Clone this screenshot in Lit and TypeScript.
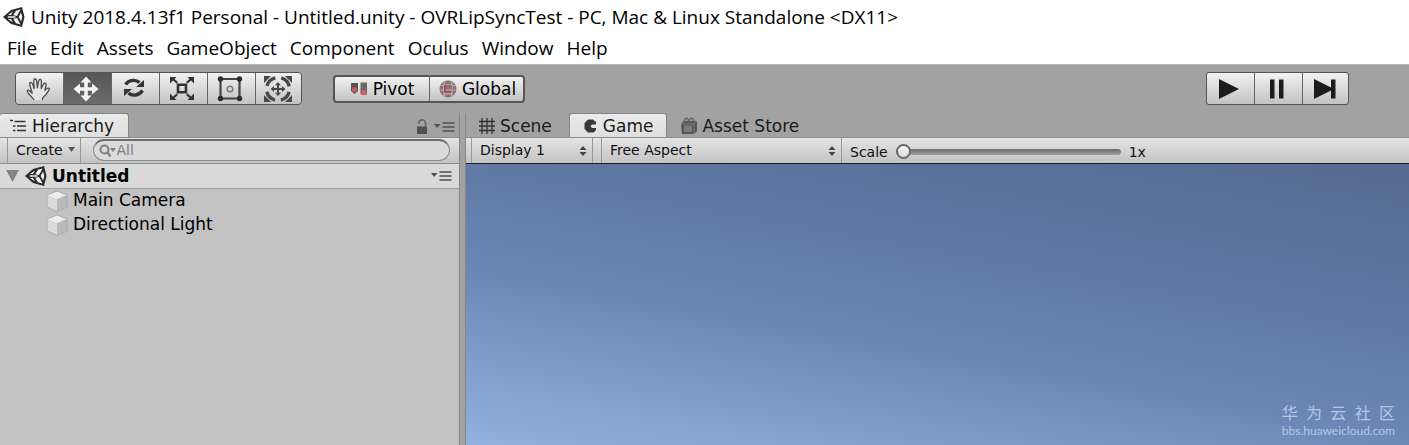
import { LitElement, html, css, svg } from "lit";
import { customElement, property, state } from "lit/decorators.js";
import { classMap } from "lit/directives/class-map.js";

const unityLogo = html`<svg viewBox="0 0 24 24" width="24" height="24" aria-hidden="true">
  <path d="M1 12 9 5 20 2l2.500 10L20 22 9 19Z" fill="#2b2b2b"/>
  <path d="M11.200 10.300 14 5.800 18.600 4.600 15 11ZM11.200 13.700l2.800 4.500 4.600 1.200L15 13ZM5.800 11.200h7.700v1.600H5.800ZM19 7.500l1.300 4.500L19 16.500 16.700 12ZM6 10 11 6.400 9 10ZM6 14l5 3.600L9 14Z" fill="#f4f4f4"/>
</svg>`;

const toolIcons: Record<string, unknown> = {
  Hand: svg`<path d="M10 25C8.500 22 4 19 3.300 16.300c-.1-1.600 1.500-1.600 2.500-.3l2.400 2.300C7.500 14.500 5 9.500 5.800 8c1-1.300 2.500 0 2.900 1.400l1.500 4.300C10.300 9.500 9 6 10 4.500c1-1.200 2.400-.3 2.600 1.300l.8 7C14 9.500 14.300 5.500 15.500 4.500c1.300-.7 2 .6 1.900 2L17.200 13.500c1.300-2.600 2-4.700 3.200-5.300 1.500-.4 1.900 1 1.600 2.300-.6 2-.8 3.500-1 5 1-1.500 2.500-2.700 3.800-2.200 1 .6.500 1.600-.3 2.600-2 2.600-3 5-5.500 6.600-.8 1-.7 1.500-.5 2.500" fill="#e4e4e4" stroke="#4a4a4a" stroke-width="1.300" stroke-linejoin="round"/>`,
  Move: svg`<path d="M14 1.500l5.500 6h-3.700v4.700H20V8.500l6.500 5.500-6.500 5.500v-3.700h-4.200v4.700h3.700L14 26.500l-5.500-6h3.700v-4.700H8v3.700L1.500 14 8 8.500v3.700h4.200V7.500H8.500Z" fill="#f5f5f5"/>`,
  Rotate: svg`<g fill="none" stroke="#333" stroke-width="3.400"><path d="M5.500 9.500C9 4.500 16 4.300 19.500 7.500"/><path d="M22.500 15.500C19 21 12 21.200 8.500 18"/></g><path d="M24 5v7h-8ZM4 21v-7h8Z" fill="#333"/>`,
  Scale: svg`<path d="M10 9.700h8v7.600h-8Z" fill="none" stroke="#333" stroke-width="2.600"/><path d="M2 2h6.500l-2 2 3.500 3-1.500 1.500-3.500-3L2 8.500ZM26 2h-6.500l2 2-3.500 3 1.500 1.500 3.500-3 3 3ZM2 25h6.500l-2-2 3.500-3-1.500-1.500-3.500 3L2 18.500ZM26 25h-6.500l2-2-3.500-3 1.500-1.500 3.500 3 3-3Z" fill="#333"/>`,
  Rect: svg`<path d="M4.500 4h19v19.500h-19Z" fill="none" stroke="#444" stroke-width="2.200"/><g fill="#2c2c2c"><circle cx="4.500" cy="4" r="2.700"/><circle cx="23.500" cy="4" r="2.700"/><circle cx="4.500" cy="23.500" r="2.700"/><circle cx="23.500" cy="23.500" r="2.700"/></g><circle cx="14" cy="14" r="2.800" fill="none" stroke="#777" stroke-width="1.500"/>`,
  Transform: svg`<g fill="#484848"><path d="M0 1h7L0 8ZM28 1v7l-7-7ZM0 27v-7l7 7ZM28 27h-7l7-7Z"/><path d="M14 7l3 3.200h-2v2.800h3v-2l3.500 3-3.500 3v-2h-3v2.800h2L14 21l-3-3.200h2V15h-3v2L6.500 14l3.500-3v2h3v-2.800h-2Z"/></g><circle cx="14" cy="14" r="11.500" fill="none" stroke="#484848" stroke-width="3.400" stroke-dasharray="12 6.060" stroke-dashoffset="-3"/>`,
};

const paneMenuIcon = html`<svg viewBox="0 0 22 12" width="22" height="12" aria-hidden="true">
  <path d="M1 3h6.500L4.200 7Z" fill="#505050"/><path d="M9.500 2h12M9.500 6h12M9.500 10h12" stroke="#505050" stroke-width="1.500"/>
</svg>`;

const cubeIcon = html`<svg viewBox="0 0 22 22" width="22" height="22" aria-hidden="true">
  <path d="M11 1 21 5v12l-10 4.500L1 17V5Z" fill="#b4b4b4" stroke="#a2a2a2" stroke-width=".8"/>
  <path d="M11 1.500 20.500 5.200 11 9.500 1.500 5.200Z" fill="#ececec"/><path d="M1.500 5.200 11 9.500V21L1.500 16.800Z" fill="#dadada"/><path d="M20.500 5.200 11 9.500V21l9.500-4.200Z" fill="#bababa"/>
</svg>`;

@customElement("title-bar")
class TitleBar extends LitElement {
  static styles = css`
    :host { display: block; background: #fff; color: #000; font-family: "Open Sans", "Noto Sans", sans-serif; }
    .title { display: flex; align-items: center; gap: 5px; height: 34px; padding-left: 2px; font-size: 19px; white-space: nowrap; }
    .title h1 { margin: 0; font: inherit; }
    .menu { display: flex; gap: 13px; height: 30px; padding-left: 7px; }
    .item { border: 0; padding: 0; background: none; font: inherit; font-size: 19px; line-height: 26px; color: inherit; padding-bottom: 2px; }
  `;
  render() {
    return html`
      <div class="title">${unityLogo}<h1>Unity 2018.4.13f1 Personal - Untitled.unity - OVRLipSyncTest - PC, Mac &amp; Linux Standalone &lt;DX11&gt;</h1></div>
      <nav class="menu">
        ${["File", "Edit", "Assets", "GameObject", "Component", "Oculus", "Window", "Help"].map((m) => html`<button class="item">${m}</button>`)}
      </nav>`;
  }
}

@customElement("main-toolbar")
class MainToolbar extends LitElement {
  @state() tool = "Move";
  static styles = css`
    :host { display: flex; align-items: center; height: 49px; padding: 0 60px 1px 15px; border-top: 1px solid #b4b4b4; box-sizing: border-box; }
    .group { display: flex; border: 1px solid #555; border-radius: 4px; overflow: hidden; background: #666; gap: 1px; }
    .transform { margin-left: 31px; border-width: 2px; border-color: #555; }
    .play { margin-left: auto; border-radius: 3px; }
    button { display: flex; align-items: center; justify-content: center; border: 0; padding: 0; color: #000; background: linear-gradient(#f2f2f2, #c2c2c2); font: 17px/20px "DejaVu Sans", sans-serif; box-sizing: border-box; }
    .tool { width: 47px; height: 31px; padding-right: 3px; }
    .tool:last-child { width: 45px; padding-right: 1px; }
    .tool.active { background: linear-gradient(#555, #6c6c6c); }
    .mode { height: 24px; gap: 5px; }
    .pivot { width: 94px; }
    .global { width: 93px; padding-left: 2px; }
  `;
  render() {
    return html`
      <div class="group">
        ${Object.keys(toolIcons).map((name) => html`
          <button class=${classMap({ tool: true, active: name === this.tool })} aria-label=${name} @click=${() => (this.tool = name)}>
            <svg viewBox="0 0 28 28" width="28" height="28">${toolIcons[name]}</svg>
          </button>`)}
      </div>
      <div class="group transform">
        <button class="mode pivot">
          <svg viewBox="0 0 18 16" width="18" height="16" aria-hidden="true"><path d="M1 2h7v8L4.500 13 1 10Z" fill="#555"/><circle cx="4.500" cy="8.500" r="2.500" fill="#d0545e"/><path d="M10.500 1.500H17v12h-6.500Z" fill="#6a6a6a"/><circle cx="13.800" cy="11.500" r="2.700" fill="#d65c66"/></svg>Pivot
        </button>
        <button class="mode global">
          <svg viewBox="0 0 18 18" width="18" height="18" aria-hidden="true"><circle cx="9" cy="9" r="8.500" fill="#8b7475"/><path d="M2 6c4-2 10-2 14 0M1.500 10h15M4 15c3-2 7-2 10 0M6 2c-2 4-2 10 0 14M12 2c2 4 2 10 0 14" fill="none" stroke="#c0acad" stroke-width="1.100"/><path d="M6 5v7h6" fill="none" stroke="#bd3f4b" stroke-width="1.600"/></svg>Global
        </button>
      </div>
      <div class="group play">
        <button class="tool" aria-label="Play"><svg viewBox="0 0 24 24" width="24" height="24"><path d="M2 2l20 10L2 22Z" fill="#1c1c1c"/></svg></button>
        <button class="tool" aria-label="Pause"><svg viewBox="0 0 24 24" width="24" height="24"><path d="M5 2.500h4.500v19H5ZM14 2.500h4.500v19H14Z" fill="#1c1c1c"/></svg></button>
        <button class="tool" aria-label="Step"><svg viewBox="0 0 24 24" width="24" height="24"><path d="M1 2l17 8.500V2.500h4.500v19H18v-8L1 22Z" fill="#1c1c1c"/></svg></button>
      </div>`;
  }
}

const tabStyles = css`
  .tabs { display: flex; height: 24px; }
  .tab { display: flex; align-items: center; gap: 4px; box-sizing: border-box; border: 0; padding: 1px 13px 0 13px; background: none; color: #1a1a1a; font: 17px/20px "DejaVu Sans", sans-serif; white-space: nowrap; }
  .tab.active { background: linear-gradient(#ebebeb, #dedede); border: 1px solid #858585; border-bottom: 0; border-radius: 3px 3px 0 0; }
  .bar { display: flex; align-items: stretch; height: 27px; box-sizing: border-box; border-top: 1px solid #8c8c8c; border-bottom: 1px solid #8c8c8c; background: linear-gradient(#e4e4e4, #c3c3c3); color: #111; font: 14px/20px "DejaVu Sans", sans-serif; }
`;

@customElement("hierarchy-pane")
class HierarchyPane extends LitElement {
  static styles = [tabStyles, css`
    :host { display: flex; flex-direction: column; background: #c2c2c2; border-right: 1px solid #858585; box-sizing: border-box; }
    .tabs { background: #a2a2a2; }
    .tab.active { padding: 1px 14px 0 10px; border-left: 0; }
    .icons { display: flex; align-items: center; gap: 4px; margin: 4px 4px 0 auto; }
    .bar { padding-left: 7px; }
    .create { display: flex; align-items: center; gap: 5px; border: solid #999; border-width: 0 1px; padding: 0 4px 2px 8px; background: none; font: inherit; color: inherit; }
    .search { display: flex; align-items: center; flex: 1; margin: 1px 9px 2px 12px; padding-left: 5px; border: 1px solid #8a8a8a; border-top: 2px solid #6c6c6c; border-radius: 12px; background: #dadada; }
    .search input { flex: 1; min-width: 0; border: 0; padding: 0 0 2px; background: none; font: inherit; color: #555; outline: none; }
    .search input::placeholder { color: #808080; opacity: 1; }
    .scene { display: flex; align-items: center; height: 25px; padding: 0 7px 0 6px; border-bottom: 1px solid #a2a2a2; background: #d9d9d9; box-sizing: border-box; font: bold 17px/24px "DejaVu Sans", sans-serif; color: #000; }
    .scene .name { flex: 1; margin-left: 4px; }
    .logo { display: flex; margin-left: 4px; }
    ul { list-style: none; margin: 0; padding: 0; }
    .row { display: flex; align-items: center; gap: 5px; height: 24px; padding-left: 46px; font: 17px/22px "DejaVu Sans", sans-serif; color: #000; }
    .row span { padding-bottom: 2px; }
  `];
  render() {
    return html`
      <div class="tabs">
        <button class="tab active"><svg viewBox="0 0 18 16" width="18" height="16" aria-hidden="true"><path d="M0 2.500h3M4.500 3.500h11M3 8h2.500M7 8h9M3 12.500h2.500M7 12.500h9" stroke="#333" stroke-width="1.600"/></svg>Hierarchy</button>
        <div class="icons">
          <svg viewBox="0 0 14 16" width="14" height="16" aria-hidden="true"><path d="M2 7.500h10V15H2Z" fill="#505050"/><path d="M4 5V4a3 3 0 0 1 6.500 0v4" fill="none" stroke="#666" stroke-width="1.600"/></svg>${paneMenuIcon}
        </div>
      </div>
      <div class="bar">
        <button class="create">Create<svg viewBox="0 0 8 6" width="8" height="6" aria-hidden="true"><path d="M0 0h7L3.500 5Z" fill="#555"/></svg></button>
        <label class="search">
          <svg viewBox="0 0 18 16" width="18" height="16" aria-hidden="true"><circle cx="5.500" cy="6.500" r="4" fill="none" stroke="#808080" stroke-width="2"/><path d="M8.500 9.500l3 4" stroke="#808080" stroke-width="2.200"/><path d="M11 5h6l-3 4Z" fill="#808080"/></svg>
          <input type="text" placeholder="All" aria-label="Search hierarchy" />
        </label>
      </div>
      <div class="scene">
        <svg viewBox="0 0 14 12" width="14" height="12" aria-hidden="true"><path d="M0 0h13L6.500 12Z" fill="#848484"/></svg>
        <span class="logo">${unityLogo}</span><span class="name">Untitled</span>${paneMenuIcon}
      </div>
      <ul>${["Main Camera", "Directional Light"].map((n) => html`<li class="row">${cubeIcon}<span>${n}</span></li>`)}</ul>`;
  }
}

@customElement("game-pane")
class GamePane extends LitElement {
  @property({ type: Number }) scale = 0;
  static styles = [tabStyles, css`
    :host { display: flex; flex-direction: column; min-width: 0; border-left: 1px solid #858585; }
    .tab:first-child { padding: 1px 17px 0 12px; }
    .bar { align-items: center; padding-left: 5px; border-bottom-color: #1a1f2c; }
    .drop { align-self: stretch; display: flex; align-items: center; padding-right: 5px; border: solid #999; border-width: 0 1px; margin-right: 8px; }
    select { flex: 1; appearance: none; border: 0; padding: 0 0 2px 8px; background: none; font: inherit; color: inherit; }
    .display { width: 115px; }
    .aspect { width: 234px; }
    .zoom { display: flex; align-items: center; gap: 8px; padding-top: 3px; }
    input { appearance: none; width: 225px; height: 16px; margin: 0; background: none; }
    input::-webkit-slider-runnable-track { height: 6px; border-radius: 3px; background: linear-gradient(#6c6c6c, #a0a0a0); }
    input::-webkit-slider-thumb { appearance: none; width: 15px; height: 15px; margin-top: -5px; box-sizing: border-box; border: 2px solid #6a6a6a; border-radius: 50%; background: linear-gradient(#fafafa, #d8d8d8); }
    .view { position: relative; flex: 1; background: linear-gradient(190deg, #546a90 0%, #5f78a4 36%, #6b86b4 60%, #92b1df 100%); }
    .mark { position: absolute; right: 14px; bottom: 7px; color: #b4c8e6; font: 12px/14px "Lato", sans-serif; }
    .cn { display: flex; justify-content: space-between; font: 16px/23px "Noto Sans CJK SC", sans-serif; }
  `];
  render() {
    const arrows = html`<svg viewBox="0 0 8 10" width="8" height="10" aria-hidden="true"><path d="M0.500 4 4 0l3.500 4ZM.5 6h7L4 10Z" fill="#444"/></svg>`;
    return html`
      <div class="tabs">
        <button class="tab"><svg viewBox="0 0 18 18" width="18" height="18" aria-hidden="true"><path d="M4 1v16M9 1v16M14 1v16M1 4.500h16M1 9h16M1 13.500h16" stroke="#333" stroke-width="1.300"/></svg>Scene</button>
        <button class="tab active"><svg viewBox="0 0 16 16" width="16" height="16" aria-hidden="true"><path d="M12 3.500 10 1.500H5L1.500 5v6L5 14.500h5.500L13 12v-2H9L7.500 8 9 6.500h4V3.500Z" fill="#383838"/></svg>Game</button>
        <button class="tab"><svg viewBox="0 0 18 18" width="18" height="18" aria-hidden="true"><path d="M1 6.500 4 4h13v10l-3 3H2Z" fill="#555"/><path d="M4 5c1-5 4-5 5 0M9 5c1-5 4-5 5 0" fill="none" stroke="#666" stroke-width="1.300"/><path d="M4 8.500h8V15H4Z" fill="#7c7c7c"/><path d="M1 7h13l3-3M14 7v10" fill="none" stroke="#8c8c8c" stroke-width=".8"/></svg>Asset Store</button>
      </div>
      <div class="bar">
        <span class="drop display"><select aria-label="Display"><option>Display 1</option></select>${arrows}</span>
        <span class="drop aspect"><select aria-label="Aspect"><option>Free Aspect</option></select>${arrows}</span>
        <label class="zoom">Scale<input type="range" min="0" max="10" .value=${String(this.scale)} />1x</label>
      </div>
      <div class="view"><div class="mark"><div class="cn">${[..."华为云社区"].map((c) => html`<span>${c}</span>`)}</div>bbs.huaweicloud.com</div></div>`;
  }
}

@customElement("app-root")
class AppRoot extends LitElement {
  static styles = css`
    :host { display: flex; flex-direction: column; min-height: 100vh; background: #a2a2a2; }
    .panes { flex: 1; display: grid; grid-template-columns: 460px 1fr; column-gap: 5px; }
  `;
  render() {
    return html`<title-bar></title-bar><main-toolbar></main-toolbar>
      <main class="panes"><hierarchy-pane></hierarchy-pane><game-pane></game-pane></main>`;
  }
}
